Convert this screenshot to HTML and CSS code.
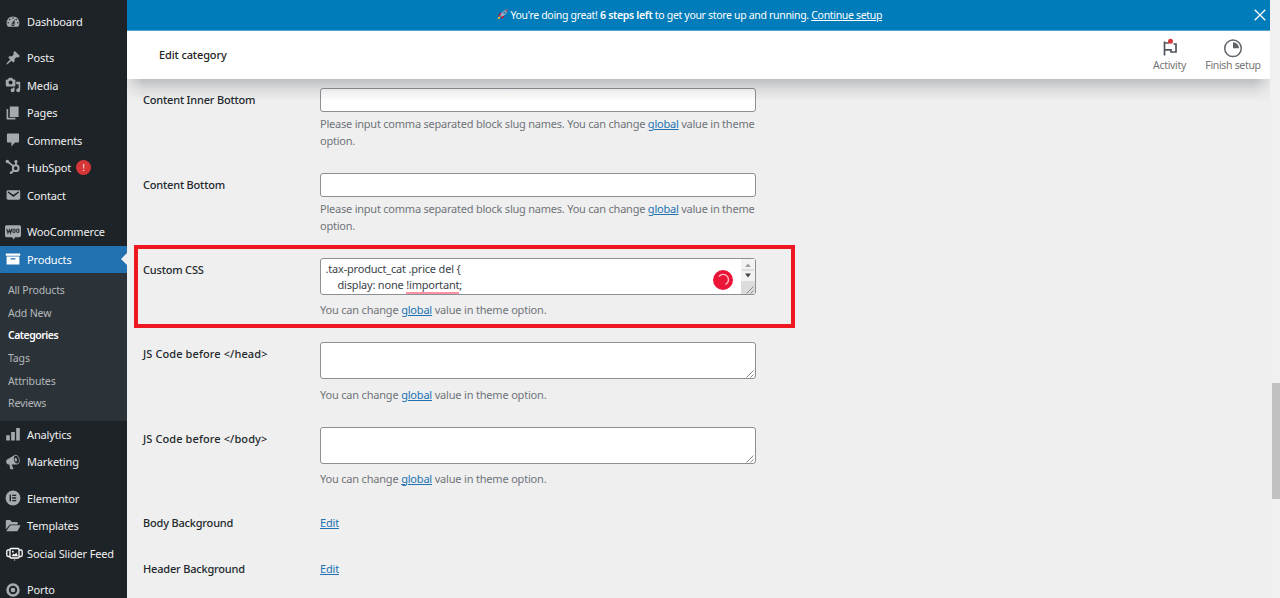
FILE: index.html
```html
<!DOCTYPE html>
<html lang="en">
<head>
<meta charset="utf-8">
<title>Edit category</title>
<link rel="stylesheet" href="styles.css">
</head>
<body>
<div class="app">
  <nav class="sidebar">
    <a class="item"><svg class="ico" viewBox="0 0 20 20"><path d="M3.76 16h12.48c1.1-1.37 1.76-3.11 1.76-5 0-4.42-3.58-8-8-8s-8 3.58-8 8c0 1.89.66 3.63 1.76 5zM10 4c.55 0 1 .45 1 1s-.45 1-1 1-1-.45-1-1 .45-1 1-1zM6 6c.55 0 1 .45 1 1s-.45 1-1 1-1-.45-1-1 .45-1 1-1zm8 0c.55 0 1 .45 1 1s-.45 1-1 1-1-.45-1-1 .45-1 1-1zm-5.37 5.55L12 7v6c0 1.1-.9 2-2 2s-2-.9-2-2c0-.57.24-1.08.63-1.45zM4 10c.55 0 1 .45 1 1s-.45 1-1 1-1-.45-1-1 .45-1 1-1zm12 0c.55 0 1 .45 1 1s-.45 1-1 1-1-.45-1-1 .45-1 1-1zm-5 3c0-.55-.45-1-1-1s-1 .45-1 1 .45 1 1 1 1-.45 1-1z"/></svg><span>Dashboard</span></a>
    <a class="item gap"><svg class="ico" viewBox="0 0 20 20"><path d="M10.44 3.02l1.82-1.82 6.36 6.35-1.83 1.82c-1.05-.68-2.48-.57-3.41.36l-.75.75c-.92.93-1.04 2.35-.35 3.41l-1.83 1.82-2.41-2.41-2.8 2.79c-.42.42-3.38 2.71-3.8 2.29s1.86-3.39 2.28-3.81l2.79-2.79L4.1 9.36l1.83-1.82c1.05.69 2.48.57 3.4-.36l.75-.75c.93-.92 1.05-2.35.36-3.41z"/></svg><span>Posts</span></a>
    <a class="item"><svg class="ico" viewBox="0 0 20 20"><path d="M13 11V4c0-.55-.45-1-1-1h-1.67L9 1H5L3.67 3H2c-.55 0-1 .45-1 1v7c0 .55.45 1 1 1h10c.55 0 1-.45 1-1zM7 4.5c1.38 0 2.5 1.12 2.5 2.5S8.38 9.5 7 9.5 4.5 8.38 4.5 7 5.62 4.5 7 4.5zM14 6h5v10.5c0 1.38-1.12 2.5-2.5 2.5S14 17.88 14 16.5s1.12-2.5 2.5-2.5c.17 0 .34.02.5.05V9h-3V6zm-4 8.05V13h2v3.5c0 1.38-1.12 2.5-2.5 2.5S7 17.88 7 16.5 8.12 14 9.5 14c.17 0 .34.02.5.05z"/></svg><span>Media</span></a>
    <a class="item"><svg class="ico" viewBox="0 0 20 20"><path d="M6 15V2h11v13H6zm-1 1h8v2H2V5h2v11z"/></svg><span>Pages</span></a>
    <a class="item"><svg class="ico" viewBox="0 0 20 20"><path d="M4 2h12c1.100 0 1.600.7 1.600 1.600v8c0 1-.6 1.600-1.600 1.600h-3.500L8 18v-4.800H4c-1.100 0-1.600-.6-1.600-1.600v-8C2.400 2.700 3 2 4 2z"/></svg><span>Comments</span></a>
    <a class="item"><svg class="ico hub" viewBox="0 0 20 20"><g fill="none" stroke="#a7aaad"><circle cx="13.400" cy="11.500" r="3.600" stroke-width="2.500"/><path d="M13.700 8V4M10.800 9.200L3.500 3.500M10.900 14.200L8 17" stroke-width="2.200"/></g><circle cx="3" cy="3.200" r="2.200"/><circle cx="13.700" cy="3.200" r="2"/><circle cx="7.600" cy="17.200" r="1.700"/></svg><span>HubSpot</span><b class="badge">!</b></a>
    <a class="item"><svg class="ico" viewBox="0 0 20 20"><path d="M3.870 4h13.250C18.370 4 19 4.590 19 5.790v8.420c0 1.190-.63 1.790-1.880 1.790H3.870c-1.250 0-1.880-.6-1.880-1.790V5.790c0-1.200.63-1.790 1.880-1.790zm6.620 8.600l6.740-5.530c.24-.2.43-.66.13-1.070-.29-.41-.82-.42-1.170-.17l-5.700 3.860L4.800 5.830c-.35-.25-.88-.24-1.170.17-.3.410-.11.870.13 1.070z"/></svg><span>Contact</span></a>
    <a class="item gap"><svg class="ico" viewBox="0 0 20 20"><path d="M2 1.500h16q2 0 2 2v11q0 2-2 2h-5.500l-1.500 3-2.200-3H2q-2 0-2-2v-11q0-2 2-2z"/><path d="M2.200 6.200l1.500 5 2-4 1.300 4 1.600-5.200" fill="none" stroke="#2a2e32" stroke-width="1.500"/><g fill="none" stroke="#2a2e32" stroke-width="1.400"><ellipse cx="11.300" cy="8.500" rx="1.500" ry="2.200"/><ellipse cx="16" cy="8.500" rx="1.500" ry="2.200"/></g></svg><span>WooCommerce</span></a>
    <a class="item current"><svg class="ico" viewBox="0 0 20 20"><path d="M19 3v3H1V3h18zM2 7h16v10H2V7zm11 3.500V9H7v1.500h6z"/></svg><span>Products</span></a>
    <div class="submenu">
      <a>All Products</a><a>Add New</a><a class="on">Categories</a><a>Tags</a><a>Attributes</a><a>Reviews</a>
    </div>
    <a class="item"><svg class="ico" viewBox="0 0 20 20"><path d="M1.500 11.500h4.500V18H1.500zM7.700 7.500h4.600V18H7.700zM14 2.500h4.500V18H14z"/></svg><span>Analytics</span></a>
    <a class="item"><svg class="ico" viewBox="0 0 20 20"><path d="M18.150 5.940c.46 1.620.38 3.220-.02 4.480-.42 1.280-1.260 2.180-2.300 2.480-.16.060-.26.060-.4.060-.06.020-.12.020-.18.020-.06.020-.14.020-.22.020h-6.800l2.220 5.500c.02.140-.06.260-.14.340-.08.100-.24.160-.34.160H6.950c-.1 0-.26-.06-.34-.16-.08-.08-.16-.2-.14-.34l-1-5.500H4.250l-.02-.02c-.5.060-1.080-.18-1.540-.62s-.88-1.080-1.060-1.880c-.24-.8-.2-1.560-.02-2.200.18-.62.58-1.080 1.060-1.300l.02-.02 9-5.400c.1-.06.18-.1.24-.16.06-.04.14-.08.24-.12.16-.08.28-.12.5-.18 1.040-.3 2.240.1 3.220.98s1.840 2.240 2.260 3.860zm-2.580 5.980h-.02c.4-.1.740-.34 1.040-.7.580-.7.860-1.760.86-3.040 0-.64-.1-1.300-.28-1.980-.34-1.360-1.020-2.500-1.780-3.240s-1.680-1.100-2.460-.88c-.82.220-1.400.960-1.700 2-.32 1.040-.28 2.360.06 3.720.38 1.360 1 2.500 1.800 3.240.78.740 1.620 1.100 2.480.88zm-2.540-7.080c.22-.04.42-.02.62.04.38.160.76.480 1.020 1s.42 1.200.42 1.780c0 .3-.04.560-.12.800-.18.480-.44.840-.86.940-.34.100-.8-.06-1.140-.4s-.64-.86-.78-1.500c-.18-.62-.12-1.240.02-1.720s.48-.84.820-.94z"/></svg><span>Marketing</span></a>
    <a class="item gap"><svg class="ico" viewBox="0 0 20 20"><circle cx="10" cy="10" r="9.300"/><path d="M5.800 6h1.700v8H5.800zM9 6h5v1.600H9zM9 9.200h5v1.600H9zM9 12.400h5V14H9z" fill="#1d2327"/></svg><span>Elementor</span></a>
    <a class="item"><svg class="ico" viewBox="0 0 20 20"><path d="M1 4q0-1.500 1.500-1.500h4L8.500 5h6Q16 5 16 6.500V8H6L1 14.500z"/><path d="M6.700 9H19.500l-4 7.500H1.500z"/></svg><span>Templates</span></a>
    <a class="item"><svg class="ico wide" viewBox="0 0 17 14"><g fill="none" stroke="#fff" stroke-width="1.300"><rect x="4" y="1.500" width="9" height="9.500" rx="1"/><path d="M3.800 3H2Q.8 3 .8 4.500v3.500Q.8 9.500 2 9.500h1.800M13.200 3H15q1.200 0 1.200 1.500v3.500q0 1.500-1.200 1.500h-1.800"/></g><path d="M5.500 9.200l2-2.700 1.300 1.200 1.400-2.200 1.800 3.700z" fill="#fff"/><circle cx="6.800" cy="4.700" r=".9" fill="#fff"/><circle cx="8.500" cy="13" r=".8"/></svg><span>Social Slider Feed</span></a>
    <a class="item gap"><svg class="ico" viewBox="0 0 20 20"><circle cx="10" cy="10" r="6.800" fill="none" stroke="#a7aaad" stroke-width="3.200"/><circle cx="10" cy="10" r="2.900"/></svg><span>Porto</span></a>
  </nav>

  <main class="main">
    <div class="notice">
      <svg class="rocket" viewBox="0 0 12 12"><path d="M1 7l2.500-3 3 .3L4.500 8z" fill="#be1931"/><path d="M5 11l3-2.500-.3-3L4 7.500z" fill="#be1931"/><path d="M11.500.5C8 .5 5 3 3.500 7.500l1 1C9 7 11.500 4 11.500.5z" fill="#8fb3d0"/><path d="M11.500.5l-2.700.6 2.100 2.100z" fill="#b52c42"/><circle cx="8" cy="4" r="1.200" fill="#36688f"/><path d="M.8 11.200Q1 8.500 2.600 8.300l1.100 1.100Q3.500 11 .8 11.200z" fill="#ffb52e"/></svg>
      <span class="n1">You're doing great!</span> <b>6 steps left</b> <span class="n2">to get your store up and running.</span> <a>Continue setup</a>
      <svg class="close" viewBox="0 0 12 12"><path d="M.7.700l10.600 10.600M11.300.700L.7 11.300" stroke="#fff" stroke-width="1.300"/></svg>
    </div>
    <header class="header">
      <h1>Edit category</h1>
      <div class="tab activity">
        <svg viewBox="0 0 18 20"><path d="M3.500 3.500v14M3.500 5h4.500M12.500 6h2.500v8H10v-2.200H3.500" fill="none" stroke="#50575e" stroke-width="1.700"/><circle cx="9.500" cy="3.200" r="2.500" fill="#d63638"/></svg>
        <span>Activity</span>
      </div>
      <div class="tab finish">
        <svg viewBox="0 0 20 20"><circle cx="10" cy="10.300" r="8.300" fill="none" stroke="#606468" stroke-width="1.500"/><path d="M10 10.300V4.300a6 6 0 0 1 6 6z" fill="#606468"/></svg>
        <span>Finish setup</span>
      </div>
    </header>

    <div class="form">
      <div class="row r1"><label>Content Inner Bottom</label><div class="field"><div class="input"></div><p>Please input comma separated block slug names. You can change <a>global</a> value in theme<br>option.</p></div></div>
      <div class="row r2"><label>Content Bottom</label><div class="field"><div class="input"></div><p>Please input comma separated block slug names. You can change <a>global</a> value in theme<br>option.</p></div></div>
      <div class="row r3"><label>Custom CSS</label><div class="field">
        <div class="area code">
          <div class="text">.tax-product_cat .price del {<br><span class="indent">display: none <u>!important</u>;</span></div>
          <svg class="spinner" viewBox="0 0 20 20"><circle cx="10" cy="10" r="10" fill="#eb1537"/><path d="M6 6.500A5.300 5.300 0 1 1 12.500 14.500" fill="none" stroke="#ffb9c5" stroke-width="1.400"/></svg>
          <div class="bar"><svg viewBox="0 0 14 36"><path d="M0 0h14v22H0z" fill="#f3f3f3"/><path d="M0 22h14v14H0z" fill="#dcdcdc"/><path d="M1 11h12" stroke="#c8c8c8"/><path d="M4 8l3-3.500L10 8z" fill="#a3a3a3"/><path d="M4 14.500h6l-3 4z" fill="#444"/></svg></div>
          <svg class="grip" viewBox="0 0 8 8"><path d="M.5 7.500l7-7M4.500 7.500l3-3" stroke="#888" stroke-width="1"/></svg>
        </div><p>You can change <a>global</a> value in theme option.</p></div></div>
      <div class="row r4"><label class="js">JS Code before &lt;/head&gt;</label><div class="field"><div class="area"><svg class="grip" viewBox="0 0 8 8"><path d="M.5 7.500l7-7M4.500 7.500l3-3" stroke="#888" stroke-width="1"/></svg></div><p>You can change <a>global</a> value in theme option.</p></div></div>
      <div class="row r5"><label class="js">JS Code before &lt;/body&gt;</label><div class="field"><div class="area"><svg class="grip" viewBox="0 0 8 8"><path d="M.5 7.500l7-7M4.500 7.500l3-3" stroke="#888" stroke-width="1"/></svg></div><p>You can change <a>global</a> value in theme option.</p></div></div>
      <div class="row r6"><label>Body Background</label><div class="field"><a>Edit</a></div></div>
      <div class="row r7"><label>Header Background</label><div class="field"><a>Edit</a></div></div>
    </div>
    <div class="highlight"></div>
  </main>
  <div class="scroll"><div class="thumb"></div></div>
</div>
</body>
</html>
```
FILE: styles.css
```css
* { box-sizing: border-box; }
body {
  margin: 0;
  background: #efefef;
  font-family: "Noto Sans", "Open Sans", sans-serif;
  font-size: 11px;
  color: #3c434a;
  overflow: hidden;
}
.app { display: flex; height: 598px; overflow: hidden; }

.sidebar {
  flex: none;
  width: 127px;
  padding-top: 7.750px;
  background: #1d2327;
  color: #f0f0f1;
  letter-spacing: -.15px;
}
.item { display: flex; align-items: center; height: 27.500px; position: relative; white-space: nowrap; }
.item.gap { margin-top: 8.900px; }
.ico { flex: none; width: 16px; height: 16px; margin: 0 6px 0 5px; fill: #a7aaad; }
.ico.hub { margin-top: -2px; }
.ico.wide { width: 17px; height: 14px; margin: 1px 4px 0 6px; }
.badge {
  width: 15px; height: 15px; margin-left: 5px;
  border-radius: 50%; background: #d63638; color: #fff;
  font-size: 9px; font-weight: 400; line-height: 15px; text-align: center;
}
.item.current { background: #2271b1; color: #fff; }
.item.current .ico { fill: #fff; }
.item.current::after {
  content: ""; position: absolute; right: 0; top: 7px;
  border: 6.500px solid transparent; border-left: 0; border-right-color: #efefef;
}
.submenu { height: 147.600px; padding: 6px 0 0 8px; background: #2c3338; color: #b4b8bc; font-size: 10.500px; }
.submenu a { display: block; height: 22.650px; line-height: 22.650px; }
.submenu .on { color: #fff; font-weight: 600; letter-spacing: -.5px; }

.main { flex: none; width: 1143px; position: relative; }
.notice {
  position: relative;
  display: flex; align-items: center; justify-content: center; gap: 2.500px;
  height: 31px; padding: 0 18px 1px 0;
  background: #007cba; border-bottom: 1px solid #55a7d2; color: #fff;
  font-size: 10.500px; letter-spacing: -.32px;
}
.notice b { font-weight: 600; }
.notice a { text-decoration: underline; }
.rocket { width: 11px; height: 11px; }
.close { position: absolute; right: 4px; top: 9px; width: 12px; height: 12px; }
.header {
  position: relative;
  display: flex; align-items: center;
  height: 48px; padding-left: 32px; background: #fff;
}
.header::after {
  content: ""; position: absolute; left: 0; right: 0; top: 48px; height: 22px;
  background: linear-gradient(rgba(60,65,75,.28), rgba(60,65,75,.1) 50%, transparent);
  -webkit-mask: linear-gradient(90deg, rgba(0,0,0,.3), #000 16px, #000 1127px, rgba(0,0,0,.3));
}
.header h1 { margin: 0 auto 0 0; padding-bottom: 2px; font-size: 11px; font-weight: 500; letter-spacing: -.12px; color: #1e1e1e; }
.tab { display: flex; flex-direction: column; align-items: center; color: #757575; font-size: 10.500px; line-height: 14px; letter-spacing: -.32px; white-space: nowrap; }
.tab svg { height: 20px; margin-bottom: 0; }
.activity { width: 35px; margin-right: 18px; }
.finish { width: 56px; margin-right: 9px; }
.activity svg { width: 18px; }
.finish svg { width: 20px; }

.form { padding: 9px 0 0 16px; }
.row { display: flex; }
.row label { width: 177px; padding-top: 4px; line-height: 16px; font-weight: 500; letter-spacing: -.19px; color: #23282d; }
.row .js { letter-spacing: .1px; }
.field { width: 435.500px; color: #6f747a; letter-spacing: -.19px; }
.field a { color: #2271b1; text-decoration: underline; }
.field p { margin: 0; padding-top: 4px; line-height: 16.800px; white-space: nowrap; }
.r1, .r2 { height: 85px; }
.r1 .field, .r2 .field { letter-spacing: -.225px; }
.r3 { height: 84px; }
.r4 { height: 84.500px; }
.r5 { height: 84px; }
.r6 { height: 46.500px; }
.r6 .field, .r7 .field { padding-top: 4px; line-height: 16px; }
.input { height: 24px; border: 1px solid #8c8f94; border-radius: 3px; background: #fff; }
.area { position: relative; height: 37px; border: 1px solid #8c8f94; border-radius: 3px; background: #fff; }
.area + p { padding-top: 7px; }
.r4 .area + p { padding-top: 8px; }
.text { padding: 2px 0 0 4.500px; line-height: 16px; color: #3c434a; }
.indent { padding-left: 12px; }
.text u { text-decoration: none; border-bottom: 2px solid #ff8fa2; }
.spinner { position: absolute; left: 392px; top: 11px; width: 20px; height: 20px; }
.bar { position: absolute; right: 0; top: 0; width: 14px; height: 35px; overflow: hidden; }
.bar svg { display: block; width: 14px; height: 36px; }
.grip { position: absolute; right: 1px; bottom: 0; width: 8px; height: 8px; }
.highlight { position: absolute; left: 7px; top: 245px; width: 661px; height: 83px; border: 4px solid #ee1822; }

.scroll { flex: 1; padding: 383px 0 0 2px; background: #f0f0f0; }
.thumb { height: 116px; background: #c1c1c1; }
```
